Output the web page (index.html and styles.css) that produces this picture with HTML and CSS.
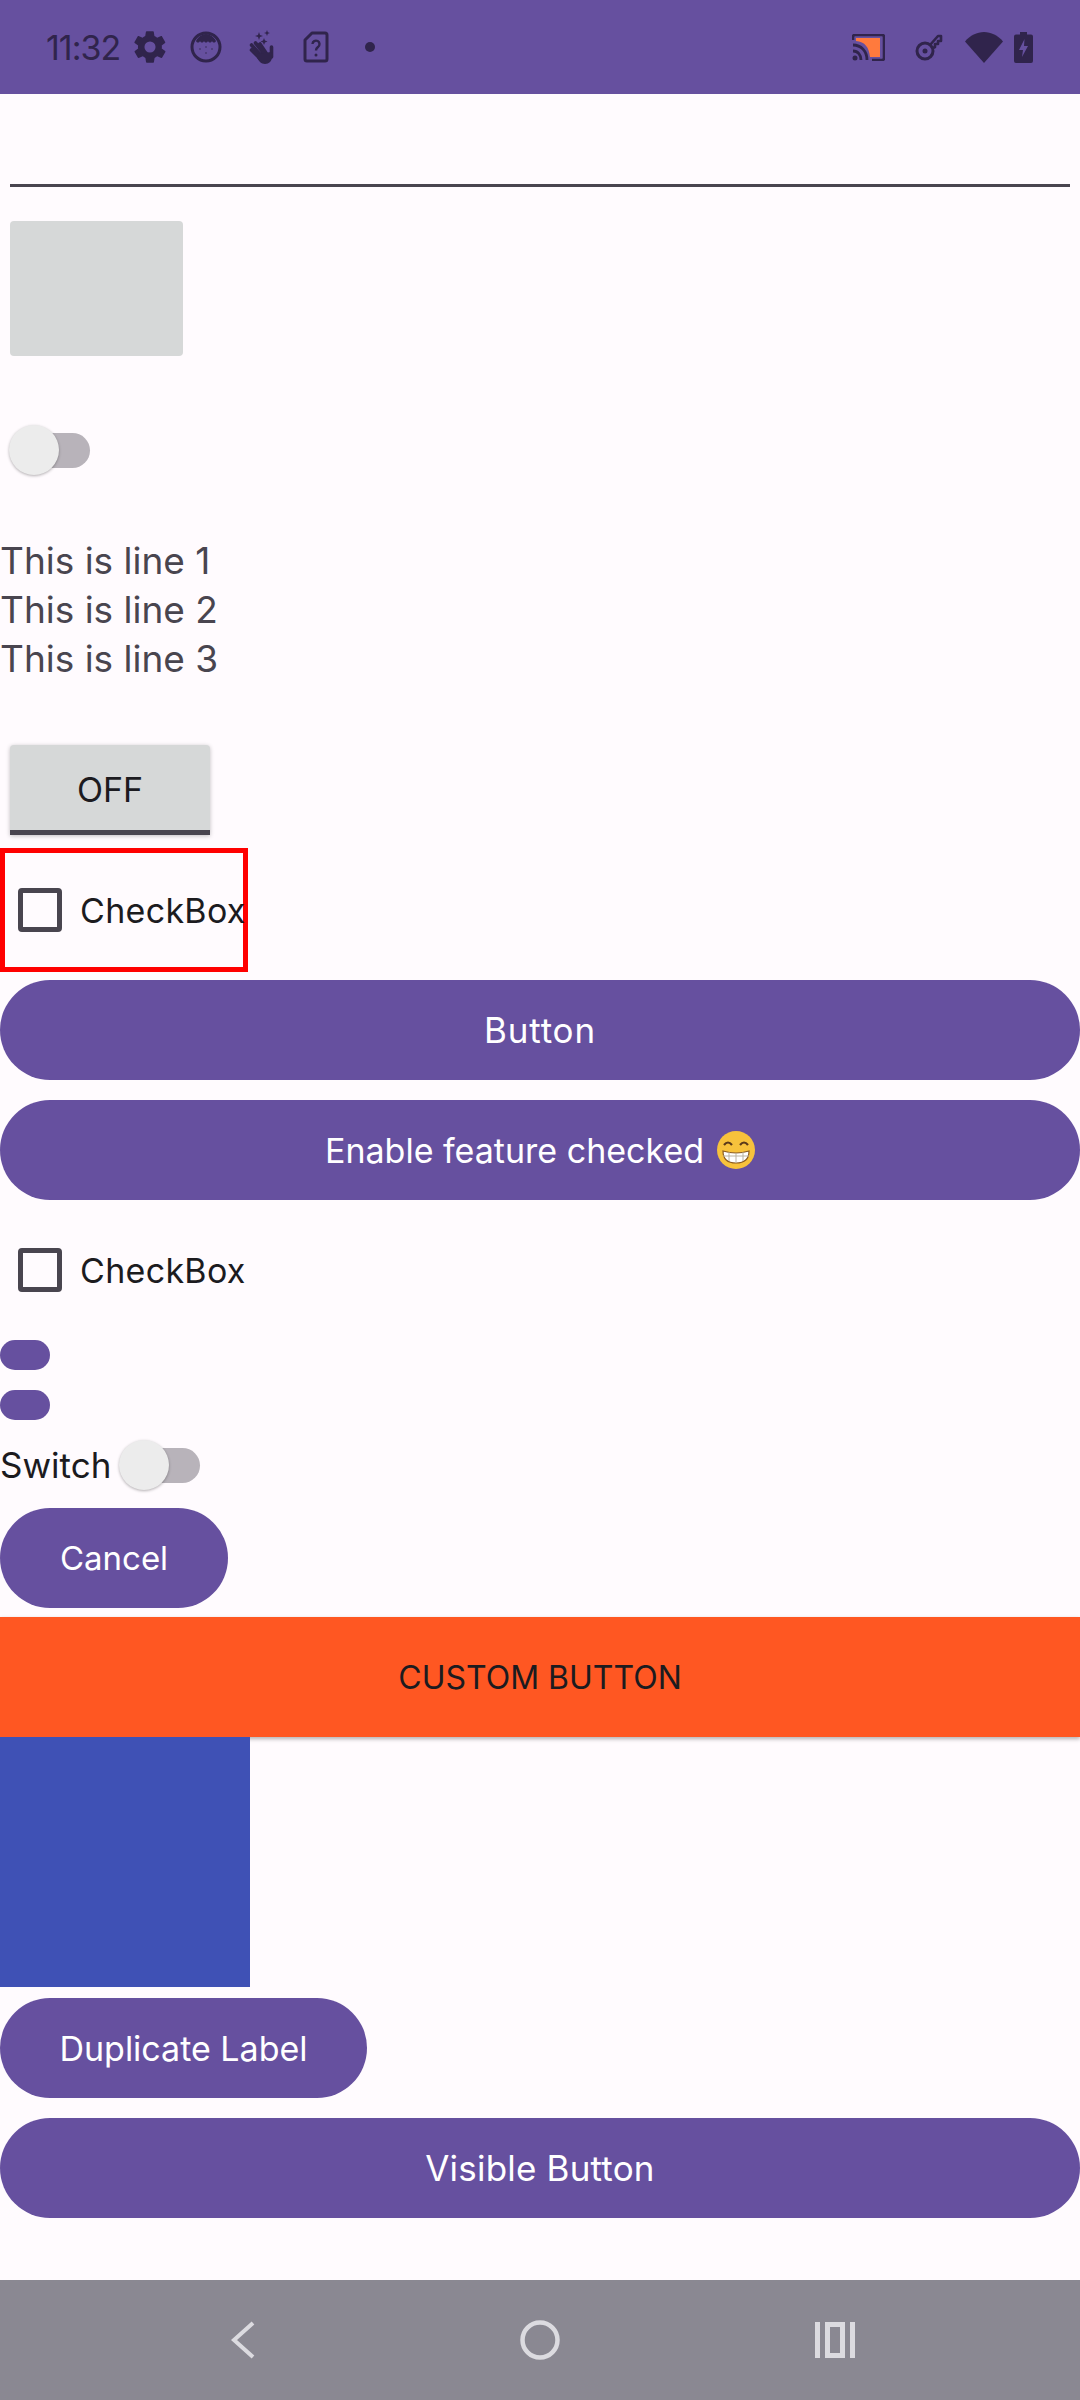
FILE: index.html
```html
<!DOCTYPE html>
<html lang="en">
<head>
    <meta charset="utf-8">
    <title>Widgets</title>
    <link rel="stylesheet" href="styles.css">
</head>
<body>
<div class="status-bar">
    <span class="time">11:32</span>
    <svg class="icon gear" viewBox="0 0 24 24"><path d="M19.4 13c.1-.3.1-.6.1-1s0-.7-.1-1l2.100-1.600c.2-.2.2-.4.1-.6l-2-3.500c-.1-.2-.4-.3-.6-.2l-2.500 1c-.5-.4-1.100-.7-1.700-1l-.4-2.600c0-.2-.2-.4-.5-.4h-4c-.2 0-.4.200-.5.4l-.4 2.600c-.6.3-1.200.6-1.700 1l-2.500-1c-.2-.1-.5 0-.6.2l-2 3.500c-.1.2-.1.500.1.600L4.500 11c0 .3-.1.600-.1 1s0 .7.100 1l-2.100 1.600c-.2.200-.2.400-.1.600l2 3.500c.1.200.4.300.6.200l2.500-1c.5.400 1.100.700 1.700 1l.4 2.600c0 .2.200.4.500.4h4c.3 0 .5-.2.5-.4l.4-2.600c.6-.3 1.200-.6 1.700-1l2.500 1c.2.100.5 0 .6-.2l2-3.500c.1-.2.1-.4-.1-.6zM12 15.500a3.500 3.500 0 1 1 0-7 3.500 3.500 0 0 1 0 7z"/></svg>
    <svg class="icon face" viewBox="0 0 32 32"><circle cx="16" cy="16" r="14" fill="none" stroke="currentColor" stroke-width="3"/><path d="M6 10c2-4 6-7 10-7s8 3 10 7c-1 2-3 2-4 0-1 2-3 2-4 0-1 2-3 2-4 0-1 2-3 2-4 0-1 2-3 2-4 0z"/><g opacity="0.5"><circle cx="10" cy="18" r="1"/><circle cx="16" cy="22" r="1"/><circle cx="22" cy="18" r="1"/><circle cx="16" cy="16" r="1"/></g></svg>
    <svg class="icon hand" viewBox="0 0 25 35"><g fill="none" stroke="currentColor" stroke-width="3.600" stroke-linecap="round"><path d="M2.500 15l10 11M2.500 20l9 9M6.500 13l9 11M11 14l6 9M22.500 17v10"/></g><path d="M8 24l14-2 1 5c0 4-3 7-7 7-4 0-6-3-8-6z"/><path d="M10 2l1 3 3 1-3 1-1 3-1-3-3-1 3-1zM18 0l.8 2.200L21 3l-2.200.800L18 6l-.8-2.200L15 3l2.200-.800zM15 8l1 2.500 2.500 1-2.500 1L15 15l-1-2.500-2.500-1 2.500-1z"/></svg>
    <svg class="icon sim" viewBox="0 0 26 32"><path d="M9 2h13a2 2 0 0 1 2 2v24a2 2 0 0 1-2 2H4a2 2 0 0 1-2-2V9z" fill="none" stroke="currentColor" stroke-width="3" stroke-linejoin="round"/><path d="M9.500 13a3.500 3.500 0 1 1 5.500 3c-1.300 1-2 1.500-2 3.500" fill="none" stroke="currentColor" stroke-width="2.400"/><circle cx="13" cy="24" r="1.500"/></svg>
    <span class="dot"></span>
    <span class="status-right">
        <svg class="icon cast" viewBox="0 0 33 27"><path d="M4 4h24v19H18C17 13 13 8 4 7z" fill="#ff7a3d"/><path d="M1 6V3a2 2 0 0 1 2-2h27a2 2 0 0 1 2 2v21a2 2 0 0 1-2 2H20" fill="none" stroke="currentColor" stroke-width="2.600"/><path d="M1 11c8 0 14 6 14 15M1 17c5 0 8 4 8 9" fill="none" stroke="currentColor" stroke-width="2.800"/><circle cx="3" cy="24" r="2.500"/></svg>
        <svg class="icon key" viewBox="0 0 28 28"><path d="M15 12L23 3h3v5h-3v3h-3v3l-2 1" fill="none" stroke="currentColor" stroke-width="2.600" stroke-linejoin="round"/><circle cx="10" cy="18" r="8" fill="none" stroke="currentColor" stroke-width="3"/><circle cx="10" cy="18" r="2.500"/></svg>
        <svg class="icon wifi" viewBox="0 0 38 31"><path d="M0 9.500C5 3.500 12 0 19 0s14 3.500 19 9.500L19 31z"/></svg>
        <svg class="icon battery" viewBox="0 0 19 31"><path d="M6 0h7v2.500h4a2 2 0 0 1 2 2V29a2 2 0 0 1-2 2H2a2 2 0 0 1-2-2V4.500a2 2 0 0 1 2-2h4z"/><path d="M10.500 7L5 18h4l-1 7 6-11h-4z" fill="#66509f"/></svg>
    </span>
</div>

<div class="edit-line"></div>
<div class="grey-box"></div>

<div class="switch switch-first"><span class="thumb"></span></div>

<div class="lines">
    <div>This is line 1</div>
    <div>This is line 2</div>
    <div>This is line 3</div>
</div>

<div class="toggle">OFF</div>

<div class="check-row highlighted">
    <span class="check"></span>
    <span class="check-label">CheckBox</span>
</div>

<div class="btn btn-wide btn-first">Button</div>
<div class="btn btn-wide btn-next btn-enable">Enable feature checked
    <svg class="emoji" viewBox="0 0 38 38">
        <circle cx="19" cy="19" r="19" fill="#f7c23c"/>
        <path d="M7 14q4-5 8 0M23 14q4-5 8 0" fill="none" stroke="#5b3a1a" stroke-width="2.200"/>
        <path d="M6 20q13 4 26 0q0 12-13 12T6 20z" fill="#fff" stroke="#8a5a1f" stroke-width="1.200"/>
        <path d="M6 25h26M12 21v9M19 22v10M26 21v9" stroke="#b9b2a2" stroke-width="1"/>
    </svg>
</div>

<div class="check-row check-second">
    <span class="check"></span>
    <span class="check-label">CheckBox</span>
</div>

<div class="pill pill-first"></div>
<div class="pill pill-next"></div>

<div class="switch-row">
    <span class="switch-label">Switch</span>
    <div class="switch"><span class="thumb"></span></div>
</div>

<div class="btn btn-cancel">Cancel</div>
<div class="custom-btn">CUSTOM BUTTON</div>
<div class="blue-box"></div>
<div class="btn btn-duplicate">Duplicate Label</div>
<div class="btn btn-wide btn-next btn-visible">Visible Button</div>

<div class="nav-bar">
    <svg class="nav-back" viewBox="0 0 25 38"><path d="M23 2L4 19l19 17" fill="none" stroke="currentColor" stroke-width="4"/></svg>
    <svg class="nav-home" viewBox="0 0 40 40"><circle cx="20" cy="20" r="17.500" fill="none" stroke="currentColor" stroke-width="4.500"/></svg>
    <svg class="nav-recents" viewBox="0 0 40 36"><path d="M0 0h5v36H0zM35 0h5v36h-5z" fill="currentColor"/><path d="M12.500 2.500h15v31h-15z" fill="none" stroke="currentColor" stroke-width="5"/></svg>
</div>
</body>
</html>
```

FILE: styles.css
```css
* {
    box-sizing: border-box;
}

html, body {
    margin: 0;
    height: 2400px;
}

body {
    display: flex;
    flex-direction: column;
    background-color: #fffbfe;
    color: #1c1b1f;
    font-family: Inter, "Liberation Sans", sans-serif;
    font-size: 34px;
    overflow: hidden;
}

/* status bar */
.status-bar {
    height: 94px;
    flex: none;
    display: flex;
    align-items: center;
    padding-left: 46px;
    background-color: #66509f;
    color: #30244c;
}

.time {
    width: 85px;
    font-size: 34px;
    letter-spacing: -1px;
}

.icon {
    display: block;
    fill: currentColor;
    flex: none;
}

.gear {
    width: 38px;
    height: 38px;
}

.face {
    width: 32px;
    height: 32px;
    margin-left: 21px;
}

.hand {
    width: 25px;
    height: 35px;
    margin-left: 27px;
}

.sim {
    width: 26px;
    height: 32px;
    margin-left: 29px;
}

.dot {
    width: 10px;
    height: 10px;
    margin-left: 36px;
    border-radius: 50%;
    background-color: #30244c;
}

.status-right {
    margin-left: auto;
    display: flex;
    align-items: center;
    padding-right: 47px;
}

.cast {
    width: 33px;
    height: 27px;
}

.key {
    width: 28px;
    height: 28px;
    margin-left: 30px;
}

.wifi {
    width: 38px;
    height: 31px;
    margin-left: 22px;
}

.battery {
    width: 19px;
    height: 31px;
    margin-left: 11px;
}

/* edit text + image */
.edit-line {
    height: 3px;
    margin: 90px 10px 0;
    background-color: #49454f;
}

.grey-box {
    width: 173px;
    height: 135px;
    margin: 34px 0 0 10px;
    border-radius: 4px;
    background-color: #d6d8d8;
}

/* switches */
.switch {
    position: relative;
    width: 81px;
    height: 50px;
    display: flex;
    align-items: center;
    justify-content: flex-end;
    flex: none;
}

.switch::before {
    content: "";
    width: 72px;
    height: 35px;
    border-radius: 18px;
    background-color: #b8b3ba;
}

.thumb {
    position: absolute;
    left: 0;
    top: 0;
    width: 50px;
    height: 50px;
    border-radius: 50%;
    background-color: #ececec;
    box-shadow: 0 1px 3px rgba(0, 0, 0, 0.3);
}

.switch-first {
    margin: 69px 0 0 9px;
}

.switch-row {
    display: flex;
    align-items: center;
    height: 50px;
    margin-top: 20px;
}

.switch-label {
    width: 119px;
    font-size: 35px;
}

/* text block */
.lines {
    margin-top: 61px;
    font-size: 37px;
    line-height: 49px;
    color: #49454f;
}

/* toggle */
.toggle {
    width: 200px;
    height: 90px;
    margin: 62px 0 0 10px;
    padding-top: 4px;
    display: flex;
    align-items: center;
    justify-content: center;
    border-bottom: 5px solid #49454f;
    border-radius: 4px 4px 0 0;
    background-color: #d6d8d8;
    box-shadow: 0 1px 4px rgba(0, 0, 0, 0.25);
}

/* checkboxes */
.check-row {
    display: flex;
    align-items: center;
    flex: none;
}

.highlighted {
    width: 248px;
    height: 124px;
    margin-top: 13px;
    padding-left: 13px;
    border: 5px solid #ff0000;
}

.check-second {
    height: 60px;
    margin-top: 40px;
    padding-left: 18px;
}

.check {
    width: 44px;
    height: 44px;
    border: 5px solid #49454f;
    border-radius: 4px;
    flex: none;
}

.check-label {
    margin-left: 18px;
    white-space: nowrap;
    letter-spacing: 0.3px;
}

/* buttons */
.btn {
    height: 100px;
    display: flex;
    align-items: center;
    justify-content: center;
    flex: none;
    border-radius: 50px;
    background-color: #66509f;
    color: #ffffff;
}

.btn-first {
    margin-top: 8px;
    font-size: 35px;
    letter-spacing: 0.8px;
}

.btn-next {
    margin-top: 20px;
}

.btn-enable {
    gap: 13px;
}

.btn-visible {
    font-size: 35px;
    letter-spacing: 0.2px;
}

.btn-cancel {
    width: 228px;
    margin-top: 18px;
    font-size: 33px;
}

.btn-duplicate {
    width: 367px;
    margin-top: 11px;
}

.emoji {
    width: 38px;
    height: 38px;
}

.pill {
    width: 50px;
    height: 30px;
    border-radius: 15px;
    background-color: #66509f;
}

.pill-first {
    margin-top: 40px;
}

.pill-next {
    margin-top: 20px;
}

.custom-btn {
    height: 120px;
    margin-top: 9px;
    display: flex;
    align-items: center;
    justify-content: center;
    flex: none;
    font-size: 32px;
    background-color: #ff5722;
    box-shadow: 0 2px 4px rgba(0, 0, 0, 0.3);
}

.blue-box {
    width: 250px;
    height: 250px;
    flex: none;
    background-color: #3f51b5;
}

/* nav bar */
.nav-bar {
    height: 120px;
    margin-top: auto;
    flex: none;
    display: flex;
    align-items: center;
    background-color: #8a8892;
    color: #dcdbe0;
}

.nav-back {
    width: 25px;
    height: 38px;
    margin-left: 230px;
}

.nav-home {
    width: 40px;
    height: 40px;
    margin-left: 265px;
}

.nav-recents {
    width: 40px;
    height: 36px;
    margin-left: 255px;
}
```
